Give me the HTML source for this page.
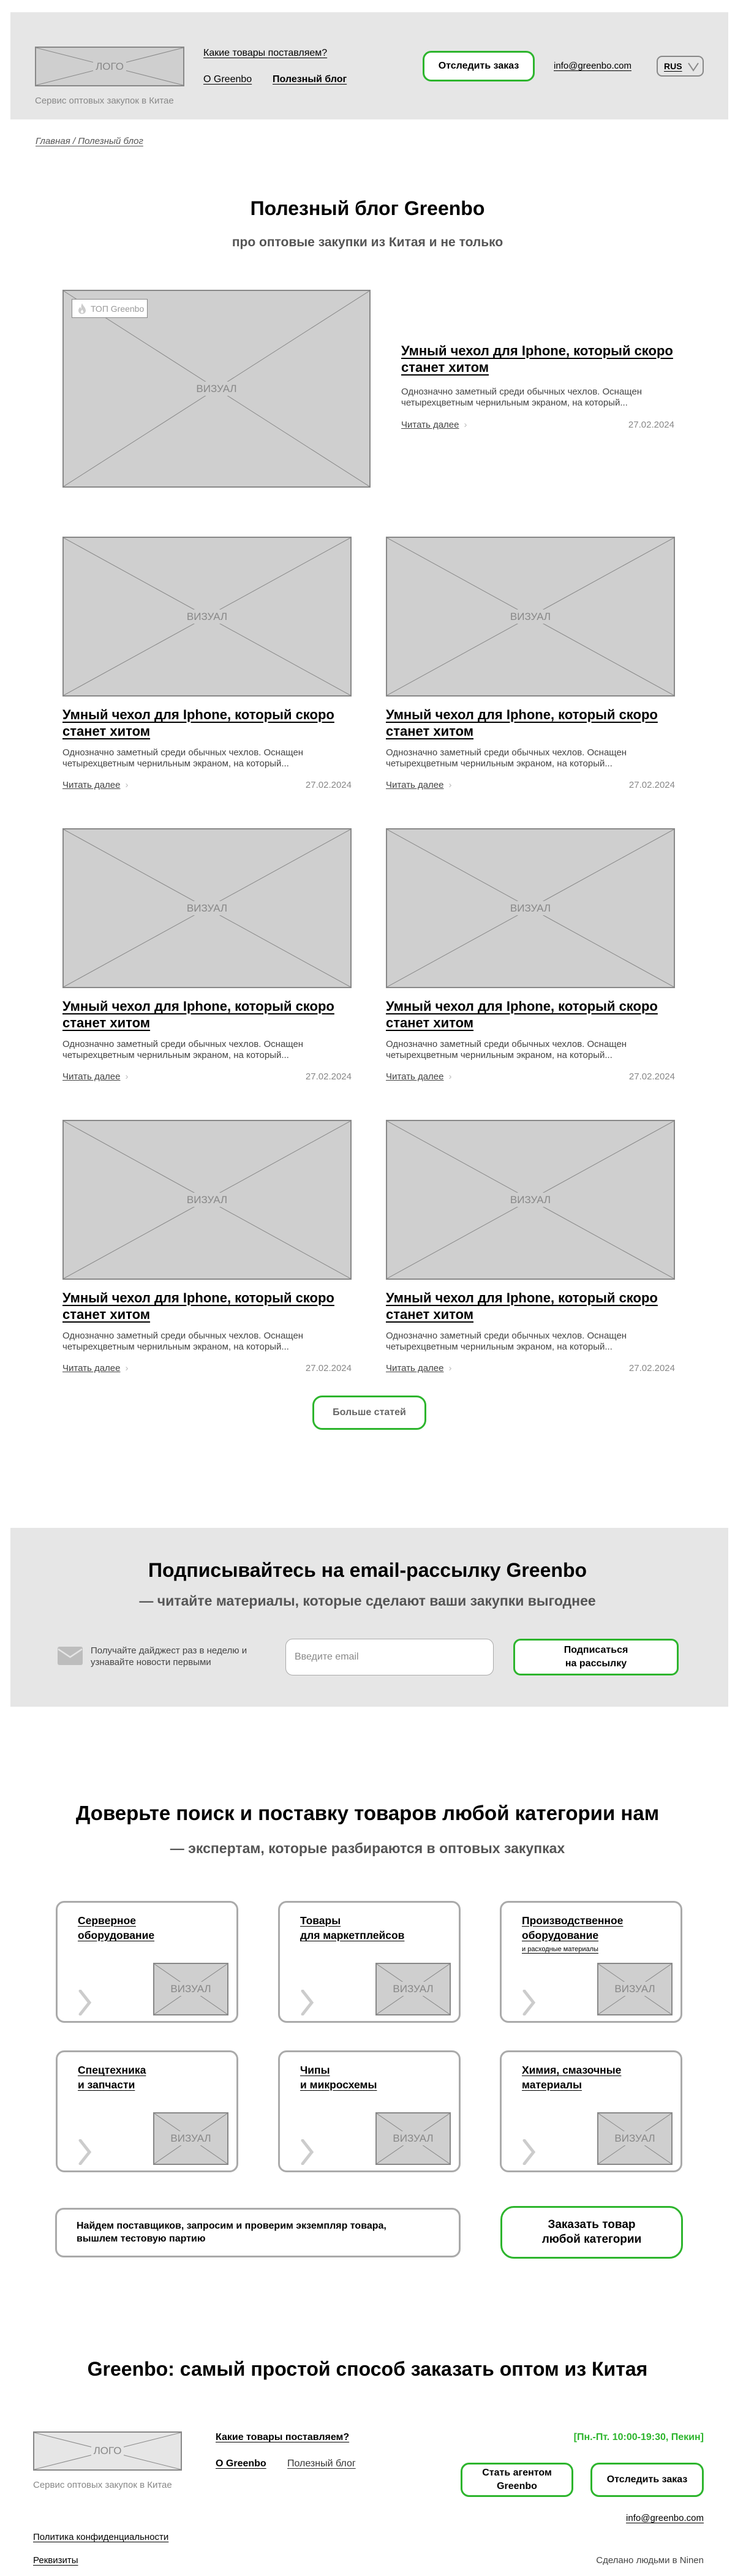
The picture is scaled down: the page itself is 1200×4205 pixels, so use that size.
<!DOCTYPE html>
<html><head><meta charset="utf-8"><style>
*{margin:0;padding:0;box-sizing:border-box}
body{width:1200px;height:4205px;position:relative;background:#fff;font-family:"Liberation Sans",Arial,sans-serif;color:#000;overflow:hidden}
.a{position:absolute}
.ph{position:absolute;background:#cfcfcf;border:2px solid #888}
.ph svg{position:absolute;left:0;top:0;width:100%;height:100%}
.ph span{position:absolute;left:0;right:0;top:50%;transform:translateY(-50%);text-align:center;color:#888;font-size:17px}
.ph span b{font-weight:normal;background:#cfcfcf;padding:2px 4px}
u{text-decoration:underline;text-underline-offset:3px}
.btn{position:absolute;border:3px solid #2db52d;border-radius:16px;background:#fff;display:flex;align-items:center;justify-content:center;text-align:center;font-weight:bold;font-size:16px;line-height:22px}
.ct{position:absolute;font-size:22px;font-weight:bold;line-height:27px;text-decoration:underline;text-underline-offset:4px}
.cd{position:absolute;font-size:15px;line-height:18px;color:#444}
.rm{position:absolute;font-size:15px;color:#444;text-decoration:underline}
.rm i{font-style:normal;color:#bbb;margin-left:8px;text-decoration:none;display:inline-block}
.dt{position:absolute;font-size:15px;color:#888;text-align:right}
.card{position:absolute;width:298px;height:199px;border:3px solid #aaa;border-radius:14px;background:#fff}
.card .t{position:absolute;left:33px;top:17px;font-size:17.5px;font-weight:bold;line-height:24px;text-decoration:underline;text-underline-offset:3px}
.card .ph{left:156px;top:98px;width:123px;height:86px}
.card .ch{position:absolute;left:34px;top:142px}
.h{position:absolute;left:0;width:1200px;text-align:center;font-weight:bold}
</style></head><body>

<!-- header -->
<div class="a" style="left:17px;top:20px;width:1172px;height:175px;background:#e6e6e6"></div>
<div class="ph" style="left:57px;top:76px;width:244px;height:65px"><svg viewBox="0 0 100 100" preserveAspectRatio="none"><line x1="0" y1="0" x2="100" y2="100" stroke="#888" vector-effect="non-scaling-stroke"/><line x1="100" y1="0" x2="0" y2="100" stroke="#888" vector-effect="non-scaling-stroke"/></svg><span><b>ЛОГО</b></span></div>
<div class="a" style="left:57px;top:156px;font-size:15px;color:#888">Сервис оптовых закупок в Китае</div>
<div class="a" style="left:332px;top:78px;font-size:16px"><u>Какие товары поставляем?</u></div>
<div class="a" style="left:332px;top:121px;font-size:16px"><u>О Greenbo</u></div>
<div class="a" style="left:445px;top:121px;font-size:16px;font-weight:bold"><u>Полезный блог</u></div>
<div class="btn" style="left:690px;top:83px;width:183px;height:50px;border-radius:14px">Отследить заказ</div>
<div class="a" style="left:904px;top:99px;font-size:15px"><u>info@greenbo.com</u></div>
<div class="a" style="left:1072px;top:91px;width:77px;height:34px;border:2px solid #888;border-radius:9px;font-size:14px;font-weight:bold;padding:7px 0 0 10px"><u>RUS</u>
<svg class="a" style="left:48px;top:8px" width="20" height="16" viewBox="0 0 20 16"><path d="M2 2 L10 14 L18 2" fill="none" stroke="#888" stroke-width="2"/></svg></div>

<div class="a" style="left:58px;top:222px;font-size:15px;color:#555;font-style:italic"><u>Главная / Полезный блог</u></div>

<div class="h" style="top:322px;font-size:32px">Полезный блог Greenbo</div>
<div class="h" style="top:384px;font-size:21px;color:#555">про оптовые закупки из Китая и не только</div>

<!-- featured -->
<div class="ph" style="left:102px;top:473px;width:503px;height:323px"><svg viewBox="0 0 100 100" preserveAspectRatio="none"><line x1="0" y1="0" x2="100" y2="100" stroke="#888" vector-effect="non-scaling-stroke"/><line x1="100" y1="0" x2="0" y2="100" stroke="#888" vector-effect="non-scaling-stroke"/></svg><span><b>ВИЗУАЛ</b></span></div>
<div class="a" style="left:117px;top:488px;width:124px;height:31px;background:#fff;border:1px solid #888;font-size:14px;color:#999;padding:7px 0 0 30px">ТОП Greenbo
<svg class="a" style="left:9px;top:5px" width="14" height="19" viewBox="0 0 14 19"><path d="M7 1 C8 5 13 8 13 13 C13 16.5 10 18.5 7 18.5 C4 18.5 1 16.5 1 13 C1 10 3 8.5 4 7 C4.5 9 5.5 10 6 10 C5 7 6 3 7 1 Z" fill="#ccc"/><path d="M7 11 C8 13 9.5 14 9 16 C8.5 17 5.5 17 5 16 C4.5 14.5 6 13 7 11Z" fill="#fff"/></svg></div>
<div class="ct" style="left:655px;top:559px;width:460px">Умный чехол для Iphone, который скоро станет хитом</div>
<div class="cd" style="left:655px;top:631px;width:460px">Однозначно заметный среди обычных чехлов. Оснащен четырехцветным чернильным экраном, на который...</div>
<div class="rm" style="left:655px;top:685px">Читать далее<i>›</i></div>
<div class="dt" style="left:900px;top:685px;width:201px">27.02.2024</div>

<!-- grid -->
<div id="grid"></div>
<script>
var g='';var ys=[876,1352,1828];var xs=[102,630];
ys.forEach(function(y){xs.forEach(function(x){
g+='<div class="ph" style="left:'+x+'px;top:'+y+'px;width:472px;height:261px"><svg viewBox="0 0 100 100" preserveAspectRatio="none"><line x1="0" y1="0" x2="100" y2="100" stroke="#888" vector-effect="non-scaling-stroke"/><line x1="100" y1="0" x2="0" y2="100" stroke="#888" vector-effect="non-scaling-stroke"/></svg><span><b>ВИЗУАЛ</b></span></div>';
g+='<div class="ct" style="left:'+x+'px;top:'+(y+277)+'px;width:472px">Умный чехол для Iphone, который скоро станет хитом</div>';
g+='<div class="cd" style="left:'+x+'px;top:'+(y+344)+'px;width:472px">Однозначно заметный среди обычных чехлов. Оснащен четырехцветным чернильным экраном, на который...</div>';
g+='<div class="rm" style="left:'+x+'px;top:'+(y+397)+'px">Читать далее<i>›</i></div>';
g+='<div class="dt" style="left:'+(x+272)+'px;top:'+(y+397)+'px;width:200px">27.02.2024</div>';
});});
document.getElementById('grid').outerHTML=g;
</script>

<div class="btn" style="left:510px;top:2278px;width:186px;height:56px;color:#666">Больше статей</div>

<!-- subscribe -->
<div class="a" style="left:17px;top:2494px;width:1172px;height:292px;background:#e6e6e6"></div>
<div class="h" style="top:2545px;font-size:32px">Подписывайтесь на email-рассылку Greenbo</div>
<div class="h" style="top:2600px;font-size:23px;color:#555">— читайте материалы, которые сделают ваши закупки выгоднее</div>
<svg class="a" style="left:94px;top:2688px" width="41" height="30" viewBox="0 0 41 30"><rect width="41" height="30" rx="3" fill="#bdbdbd"/><path d="M1 4 L20.5 17 L40 4" fill="none" stroke="#e6e6e6" stroke-width="2.5"/></svg>
<div class="a" style="left:148px;top:2685px;font-size:15px;line-height:19px;color:#444;width:280px">Получайте дайджест раз в неделю и узнавайте новости первыми</div>
<div class="a" style="left:466px;top:2675px;width:340px;height:60px;border:1px solid #aaa;border-radius:12px;background:#fff;font-size:16px;color:#888;padding:20px 0 0 14px">Введите email</div>
<div class="btn" style="left:838px;top:2675px;width:270px;height:60px;border-radius:12px">Подписаться<br>на рассылку</div>

<!-- categories -->
<div class="h" style="top:2941px;font-size:33px">Доверьте поиск и поставку товаров любой категории нам</div>
<div class="h" style="top:3004px;font-size:23px;color:#555">— экспертам, которые разбираются в оптовых закупках</div>
<div id="cats"></div>
<script>
var c='';var t=['Серверное<br>оборудование','Товары<br>для маркетплейсов','Производственное<br>оборудование<div style="font-size:11px;font-weight:normal;line-height:16px;margin-top:3px">и расходные материалы</div>','Спецтехника<br>и запчасти','Чипы<br>и микросхемы','Химия, смазочные<br>материалы'];
var cx=[91,454,816],cy=[3103,3347];
for(var i=0;i<6;i++){var x=cx[i%3],y=cy[Math.floor(i/3)];
c+='<div class="card" style="left:'+x+'px;top:'+y+'px"><div class="t">'+t[i]+'</div><div class="ph"><svg viewBox="0 0 100 100" preserveAspectRatio="none"><line x1="0" y1="0" x2="100" y2="100" stroke="#888" vector-effect="non-scaling-stroke"/><line x1="100" y1="0" x2="0" y2="100" stroke="#888" vector-effect="non-scaling-stroke"/></svg><span><b>ВИЗУАЛ</b></span></div><svg class="ch" width="22" height="42" viewBox="0 0 22 42"><path d="M3 2 L18 21 L3 40" fill="none" stroke="#ccc" stroke-width="5" stroke-linecap="round"/></svg></div>';}
document.getElementById('cats').outerHTML=c;
</script>

<div class="a" style="left:90px;top:3604px;width:662px;height:81px;border:3px solid #aaa;border-radius:14px;font-size:16px;font-weight:bold;line-height:21px;padding:16px 0 0 32px">Найдем поставщиков, запросим и проверим экземпляр товара,<br>вышлем тестовую партию</div>
<div class="btn" style="left:817px;top:3601px;width:298px;height:86px;border-radius:22px;font-size:19px;line-height:24px">Заказать товар<br>любой категории</div>

<div class="h" style="top:3849px;font-size:32px">Greenbo: самый простой способ заказать оптом из Китая</div>

<!-- footer -->
<div class="ph" style="left:54px;top:3969px;width:243px;height:64px;background:#e6e6e6"><svg viewBox="0 0 100 100" preserveAspectRatio="none"><line x1="0" y1="0" x2="100" y2="100" stroke="#888" vector-effect="non-scaling-stroke"/><line x1="100" y1="0" x2="0" y2="100" stroke="#888" vector-effect="non-scaling-stroke"/></svg><span><b style="background:#e6e6e6">ЛОГО</b></span></div>
<div class="a" style="left:54px;top:4048px;font-size:15px;color:#888">Сервис оптовых закупок в Китае</div>
<div class="a" style="left:352px;top:3970px;font-size:16px;font-weight:bold"><u>Какие товары поставляем?</u></div>
<div class="a" style="left:352px;top:4013px;font-size:16px;font-weight:bold"><u>О Greenbo</u></div>
<div class="a" style="left:469px;top:4013px;font-size:16px;color:#333"><u>Полезный блог</u></div>
<div class="a" style="left:800px;top:3970px;width:349px;text-align:right;font-size:16px;font-weight:bold;color:#2db52d">[Пн.-Пт. 10:00-19:30, Пекин]</div>
<div class="btn" style="left:752px;top:4020px;width:184px;height:56px;border-radius:14px">Стать агентом<br>Greenbo</div>
<div class="btn" style="left:964px;top:4020px;width:185px;height:56px;border-radius:14px">Отследить заказ</div>
<div class="a" style="left:900px;top:4102px;width:249px;text-align:right;font-size:15px"><u>info@greenbo.com</u></div>
<div class="a" style="left:54px;top:4133px;font-size:15px"><u>Политика конфиденциальности</u></div>
<div class="a" style="left:54px;top:4171px;font-size:15px"><u>Реквизиты</u></div>
<div class="a" style="left:900px;top:4171px;width:249px;text-align:right;font-size:15px;color:#444">Сделано людьми в Ninen</div>
</body></html>
